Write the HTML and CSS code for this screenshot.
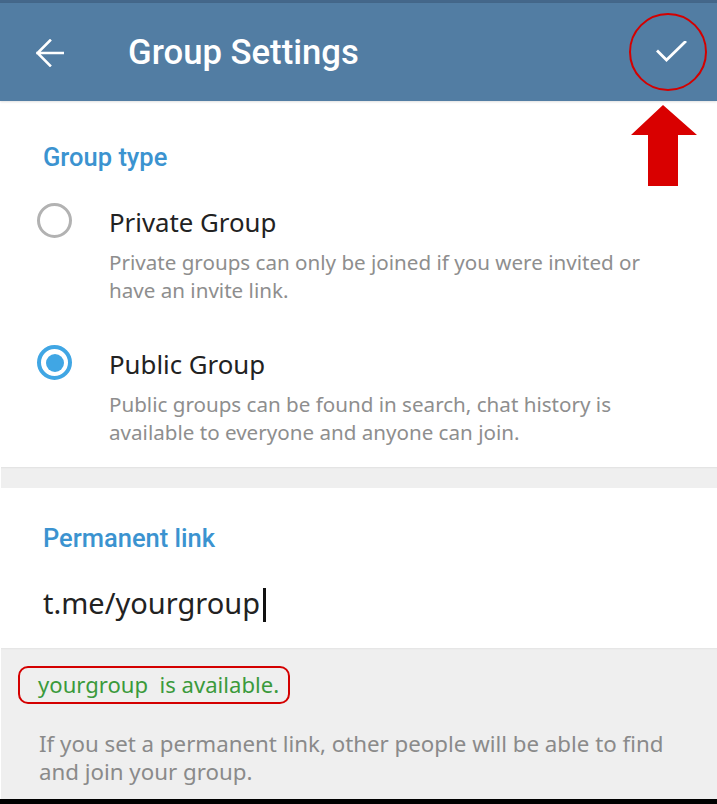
FILE: index.html
```html
<!DOCTYPE html>
<html>
<head>
<meta charset="utf-8">
<link rel="stylesheet" href="styles.css">
</head>
<body>
<div class="screen">
  <div class="statusbar"></div>
  <header class="appbar">
    <svg class="back" width="28" height="28" viewBox="0 0 28 28"><path d="M1.5 14H27M14 1.5L1.5 14L14 26.5" fill="none" stroke="#fff" stroke-width="2.6" stroke-linecap="square" stroke-linejoin="miter"/></svg>
    <h1 class="title">Group Settings</h1>
    <div class="done">
      <svg width="32" height="24" viewBox="0 0 32 24"><path d="M2 10.5L10.5 19L29 1" fill="none" stroke="#fff" stroke-width="2.8" stroke-linecap="square"/></svg>
      <span class="ring"></span>
    </div>
  </header>
  <svg class="pointer" width="68" height="82" viewBox="0 0 68 82"><path d="M32 0L66 30H47V81H17V30H0Z" fill="#d90000"/></svg>

  <section class="panel type-panel">
    <h2 class="label">Group type</h2>
    <div class="option">
      <span class="radio"></span>
      <div class="option-text">
        <div class="option-title">Private Group</div>
        <div class="option-desc">Private groups can only be joined if you were invited or have an invite link.</div>
      </div>
    </div>
    <div class="option second">
      <span class="radio checked"></span>
      <div class="option-text">
        <div class="option-title">Public Group</div>
        <div class="option-desc">Public groups can be found in search, chat history is available to everyone and anyone can join.</div>
      </div>
    </div>
  </section>
  <div class="gap"></div>
  <section class="panel link-panel">
    <h2 class="label">Permanent link</h2>
    <div class="link-input">t.me/yourgroup<span class="cursor"></span></div>
  </section>
  <section class="footer">
    <div class="available"><span class="avail-text">yourgroup  is available.</span></div>
    <p class="hint">If you set a permanent link, other people will be able to find and join your group.</p>
  </section>
  <div class="navbar"></div>
</div>
</body>
</html>
```

FILE: styles.css
```css
html, body {
  margin: 0;
  padding: 0;
  background: #fff;
}
.screen {
  position: relative;
  width: 717px;
  height: 804px;
  overflow: hidden;
  display: flex;
  flex-direction: column;
  font-family: "Noto Sans", "Open Sans", sans-serif;
}
.statusbar {
  height: 3px;
  background: #44678a;
  flex: none;
}
.appbar {
  height: 98px;
  flex: none;
  background: #527da3;
  display: flex;
  align-items: center;
  padding-left: 36px;
  position: relative;
  box-shadow: 0 1px 2px rgba(0,0,0,0.12);
  z-index: 1;
}
.back {
  flex: none;
  margin-top: 2px;
}
.title {
  margin: 0 0 0 64px;
  font-family: Roboto, "Liberation Sans", sans-serif;
  font-weight: 500;
  font-size: 34.7px;
  color: #fff;
  flex: 1;
}
.done {
  position: relative;
  width: 78px;
  height: 78px;
  margin-right: 10px;
  display: flex;
  align-items: center;
  justify-content: center;
}
.done svg {
  margin-left: 8px;
  margin-top: 2px;
}
.ring {
  position: absolute;
  inset: 0;
  border: 2px solid #d40000;
  border-radius: 50%;
}
.pointer {
  position: absolute;
  left: 631px;
  top: 105px;
  z-index: 2;
}
.panel {
  background: #fff;
  flex: none;
}
.label {
  margin: 0;
  font-family: Roboto, "Liberation Sans", sans-serif;
  font-weight: 500;
  font-size: 25.5px;
  line-height: 30px;
  color: #3b93d0;
  padding-left: 43px;
}
.type-panel {
  padding-top: 41px;
  height: 366px;
  box-sizing: border-box;
}
.option {
  display: flex;
  margin-top: 34px;
}
.option.second {
  margin-top: 44px;
}
.radio {
  flex: none;
  width: 35px;
  height: 35px;
  box-sizing: border-box;
  border: 3px solid #b2b2b2;
  border-radius: 50%;
  margin-left: 37px;
  margin-right: 37px;
  margin-top: -3px;
  position: relative;
}
.radio.checked {
  border: 4px solid #40a6e4;
}
.radio.checked::after {
  content: "";
  position: absolute;
  left: 4.5px;
  top: 4.5px;
  width: 18px;
  height: 18px;
  border-radius: 50%;
  background: #40a6e4;
}
.option-title {
  font-size: 25.8px;
  line-height: 32px;
  color: #222;
}
.option-desc {
  margin-top: 10px;
  font-size: 20.6px;
  line-height: 28px;
  color: #8e8e8e;
  width: 565px;
}
.gap {
  height: 21px;
  flex: none;
  background: #efefef;
  margin-left: 1px;
  box-shadow: inset 0 2px 2px -1px rgba(0,0,0,0.06);
}
.link-panel {
  padding-top: 35px;
  height: 160px;
  box-sizing: border-box;
}
.link-input {
  margin-top: 30px;
  padding-left: 43px;
  font-size: 29px;
  line-height: 40px;
  color: #222;
  display: flex;
  align-items: center;
}
.cursor {
  display: inline-block;
  width: 3px;
  height: 34px;
  background: #111;
  margin-left: 3px;
  margin-top: 4px;
}
.footer {
  flex: 1;
  background: #efefef;
  margin-left: 1px;
  box-shadow: inset 0 2px 2px -1px rgba(0,0,0,0.05);
  padding-top: 18px;
}
.available {
  padding-left: 17px;
}
.avail-text {
  display: inline-block;
  white-space: pre;
  border: 2px solid #d40000;
  border-radius: 10px;
  padding: 1px 9px 3px 18px;
  font-size: 22.1px;
  line-height: 30px;
  color: #3b9a3b;
}
.hint {
  margin: 26px 0 0 0;
  padding-left: 38px;
  font-size: 22.3px;
  line-height: 28px;
  color: #8a8a8a;
  width: 650px;
}
.navbar {
  height: 5px;
  flex: none;
  background: #000;
}
```
